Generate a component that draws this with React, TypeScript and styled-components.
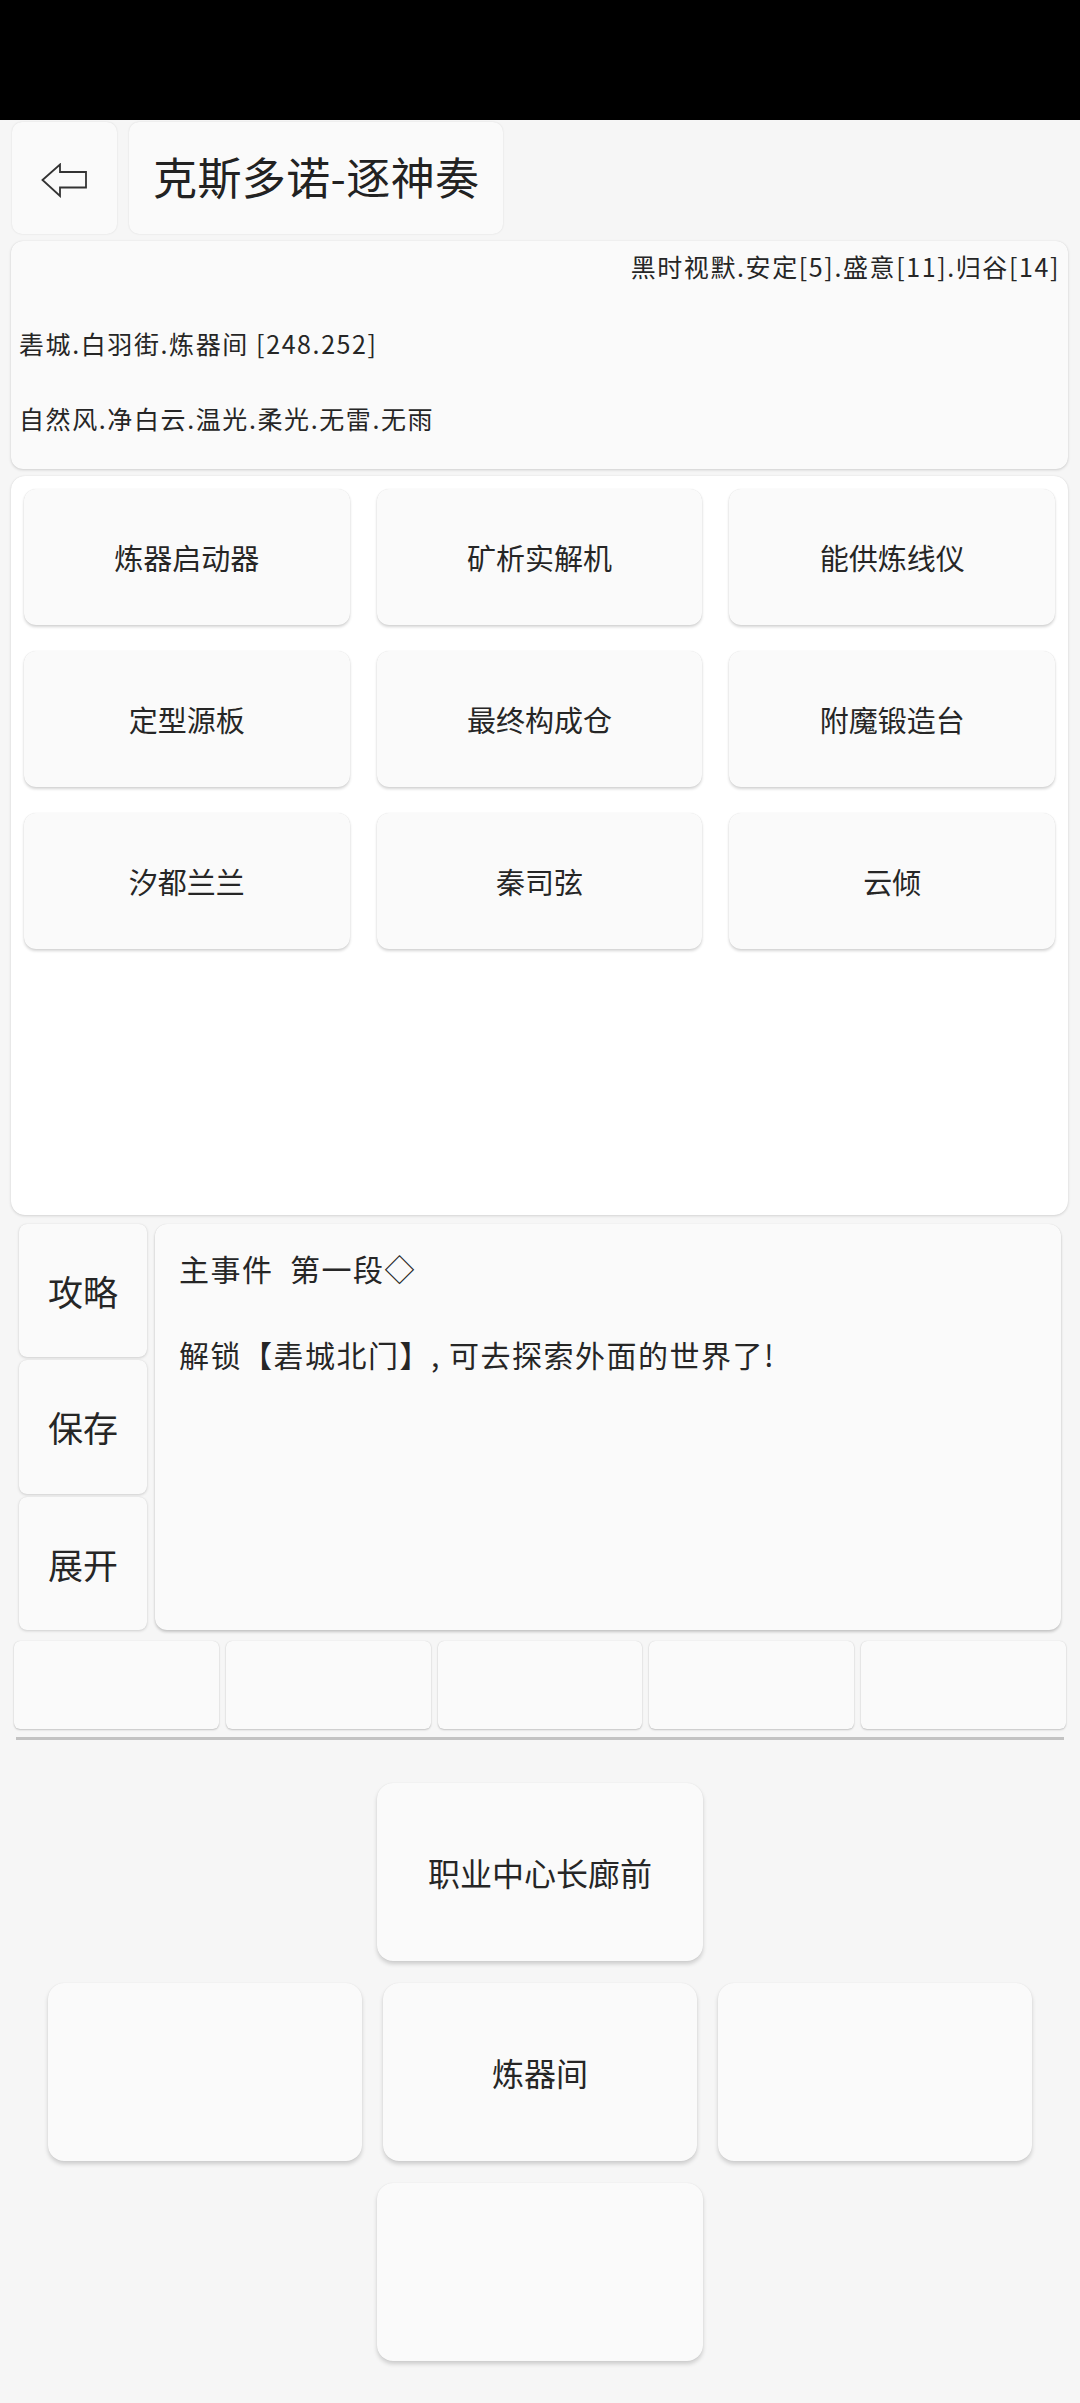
import styled, { createGlobalStyle } from "styled-components";

const GlobalStyle = createGlobalStyle`
	html, body {
		margin: 0;
		padding: 0;
		background: #f6f6f6;
	}

	body {
		font-family: "Noto Sans CJK SC", "Noto Sans", Roboto, sans-serif;
		color: #262626;
	}
`;

const Page = styled.div`
	width: 1080px;
	min-height: 2403px;
	display: flex;
	flex-direction: column;
	background: #f6f6f6;
`;

const StatusBar = styled.div`
	height: 120px;
	background: #000;
`;

const Header = styled.div`
	display: flex;
	gap: 12px;
	padding: 2px 0 0 12px;
	height: 112px;
`;

const Card = styled.div`
	background: #fafafa;
	border-radius: 10px;
	box-shadow: 0 1px 3px rgba(0, 0, 0, 0.16), 0 0 1px rgba(0, 0, 0, 0.1);
`;

const BackButton = styled(Card)`
	width: 105px;
	display: flex;
	align-items: center;
	justify-content: center;
	box-shadow: 0 0 2px rgba(0, 0, 0, 0.12);

	& > svg {
		margin: 4px 0 0 -1px;
	}
`;

const TitleCard = styled(Card)`
	display: flex;
	align-items: center;
	padding: 0 24px 4px 24px;
	font-size: 44px;
	letter-spacing: 0.4px;
	color: #222;
	box-shadow: 0 0 2px rgba(0, 0, 0, 0.12);
`;

const InfoCard = styled(Card)`
	margin: 7px 12px 0 11px;
	height: 228px;
	padding: 0 8px;
	display: flex;
	flex-direction: column;
	border-radius: 12px;
`;

const InfoLine = styled.div<{ $height: number; $right?: boolean }>`
	height: ${(props) => props.$height}px;
	box-sizing: border-box;
	padding-bottom: 10px;
	display: flex;
	align-items: center;
	justify-content: ${(props) => (props.$right ? "flex-end" : "flex-start")};
	font-size: 25px;
	letter-spacing: 1.6px;
	white-space: nowrap;
`;

const DeviceCard = styled.div`
	margin: 7px 12px 0 11px;
	height: 739px;
	box-sizing: border-box;
	padding: 13px;
	background: #fff;
	border-radius: 14px;
	box-shadow: 0 1px 3px rgba(0, 0, 0, 0.14), 0 0 1px rgba(0, 0, 0, 0.1);
	display: grid;
	grid-template-columns: repeat(3, 1fr);
	grid-auto-rows: 136px;
	column-gap: 27px;
	row-gap: 26px;
	align-content: start;
`;

const DeviceButton = styled(Card)`
	display: flex;
	align-items: center;
	justify-content: center;
	font-size: 29px;
	border-radius: 12px;
	box-shadow: 0 2px 3px rgba(0, 0, 0, 0.17), 0 0 1px rgba(0, 0, 0, 0.12);
`;

const EventArea = styled.div`
	display: flex;
	gap: 8px;
	margin: 9px 19px 0 19px;
	height: 406px;
`;

const SideColumn = styled.div`
	width: 128px;
	display: flex;
	flex-direction: column;
	gap: 3px;
`;

const SideButton = styled(Card)`
	flex: 1;
	display: flex;
	align-items: center;
	justify-content: center;
	font-size: 35px;
	border-radius: 8px;
`;

const EventCard = styled(Card)`
	flex: 1;
	padding: 24px 24px;
	border-radius: 12px;
	box-shadow: 0 2px 3px rgba(0, 0, 0, 0.2), 0 0 1px rgba(0, 0, 0, 0.12);
`;

const EventLine = styled.div<{ $gap: number }>`
	margin-top: ${(props) => props.$gap}px;
	font-size: 30px;
	letter-spacing: 1.5px;
	line-height: 40px;
	white-space: pre;
`;

const SlotRow = styled.div`
	display: flex;
	gap: 7px;
	margin: 11px 14px 0 14px;
	height: 88px;
`;

const Slot = styled(Card)`
	flex: 1;
	border-radius: 6px;
	box-shadow: 0 1px 2px rgba(0, 0, 0, 0.2), 0 0 1px rgba(0, 0, 0, 0.14);
`;

const Divider = styled.div`
	margin: 8px 16px 0 16px;
	height: 3px;
	background: #c3c3c3;
`;

const NavArea = styled.div`
	display: flex;
	flex-direction: column;
	align-items: center;
	gap: 22px;
	margin-top: 43px;
`;

const NavRow = styled.div`
	display: flex;
	gap: 21px;
	justify-content: center;
`;

const NavButton = styled(Card)<{ $wide?: boolean }>`
	width: ${(props) => (props.$wide ? 326 : 314)}px;
	height: 178px;
	display: flex;
	align-items: center;
	justify-content: center;
	font-size: 32px;
	border-radius: 16px;
	box-shadow: 0 3px 4px rgba(0, 0, 0, 0.17), 0 0 1px rgba(0, 0, 0, 0.1);
`;

const devices = [
	"炼器启动器", "矿析实解机", "能供炼线仪",
	"定型源板", "最终构成仓", "附魔锻造台",
	"汐都兰兰", "秦司弦", "云倾",
];

function BackArrow(): JSX.Element {
	return (
		<svg width="47" height="35" viewBox="0 0 47 35">
			<polygon
				points="1.5,17 19,1.5 19,9 45,9 45,24.5 19,24.5 19,33"
				fill="none"
				stroke="#333"
				strokeWidth="1.8"
				strokeLinejoin="miter"
			/>
		</svg>
	);
}

export default function App(): JSX.Element {
	return (
		<Page>
			<GlobalStyle />
			<StatusBar />

			<Header>
				<BackButton>
					<BackArrow />
				</BackButton>
				<TitleCard>克斯多诺-逐神奏</TitleCard>
			</Header>

			<InfoCard>
				<InfoLine $height={59} $right>黑时视默.安定[5].盛意[11].归谷[14]</InfoLine>
				<InfoLine $height={96}>砉城.白羽街.炼器间 [248.252]</InfoLine>
				<InfoLine $height={54}>自然风.净白云.温光.柔光.无雷.无雨</InfoLine>
			</InfoCard>

			<DeviceCard>
				{devices.map((name, index) => (
					<DeviceButton key={index}>{name}</DeviceButton>
				))}
			</DeviceCard>

			<EventArea>
				<SideColumn>
					<SideButton>攻略</SideButton>
					<SideButton>保存</SideButton>
					<SideButton>展开</SideButton>
				</SideColumn>
				<EventCard>
					<EventLine $gap={0}>主事件  第一段◇</EventLine>
					<EventLine $gap={46}>解锁【砉城北门】, 可去探索外面的世界了!</EventLine>
				</EventCard>
			</EventArea>

			<SlotRow>
				{[0, 1, 2, 3, 4].map((index) => (
					<Slot key={index} />
				))}
			</SlotRow>

			<Divider />

			<NavArea>
				<NavRow>
					<NavButton $wide>职业中心长廊前</NavButton>
				</NavRow>
				<NavRow>
					<NavButton />
					<NavButton>炼器间</NavButton>
					<NavButton />
				</NavRow>
				<NavRow>
					<NavButton $wide />
				</NavRow>
			</NavArea>
		</Page>
	);
}
